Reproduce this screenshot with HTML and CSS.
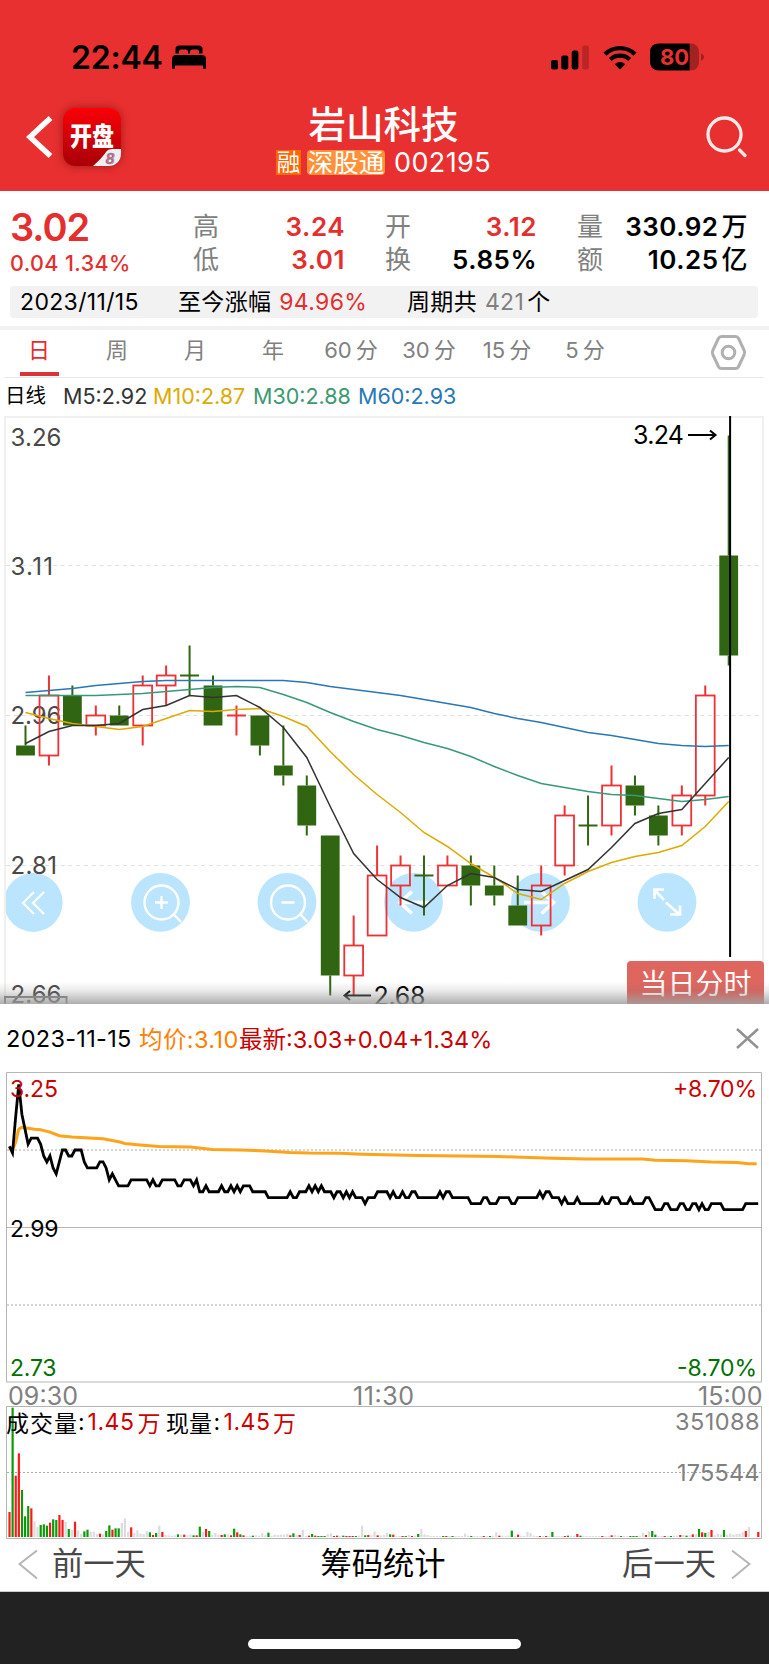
FILE: index.html
```
<!DOCTYPE html>
<html lang="zh-CN">
<head>
  <meta charset="UTF-8" />
  <title>岩山科技 002195</title>
  <link rel="stylesheet" href="styles.css">
</head>
<body>

  <header class="header">
    <div class="status">
      <span class="time">22:44</span>
      <svg class="bed" width="34" height="24" viewBox="0 0 34 24">
        <path d="M3.5 8.5V4Q3.500 .5 7 .5H27Q30.500 .5 30.500 4V8.500H27V6.500Q27 4.500 25 4.500H20.500Q18 4.500 18 6.500V8.500H16V6.500Q16 4.500 13.500 4.500H9Q7 4.500 7 6.500V8.500Z" />
        <path d="M0 23V14Q0 10 4 10H30Q34 10 34 14V23Q34 24 32.500 24Q31 24 31 23V20.500H3V23Q3 24 1.500 24Q0 24 0 23Z" />
      </svg>
      <div class="status-right">
        <svg width="39" height="25" viewBox="0 0 39 25">
          <rect x="0" y="15" width="7" height="9.500" rx="2" />
          <rect x="10.300" y="10.500" width="7" height="14" rx="2" />
          <rect x="20.700" y="5.500" width="6.700" height="19" rx="2" />
          <rect x="31.200" y="0.500" width="6.700" height="24" rx="2" opacity=".2" />
        </svg>
        <svg class="wifi" width="34" height="25" viewBox="0 0 34 25">
          <path d="M2 9.200A21.500 21.500 0 0 1 32 9.200" fill="none" stroke="#000" stroke-width="4.400" />
          <path d="M7.300 14.600A14 14 0 0 1 26.700 14.600" fill="none" stroke="#000" stroke-width="4.200" />
          <path d="M17 24.500L11.700 19.200A7.500 7.500 0 0 1 22.300 19.200Z" />
        </svg>
        <svg width="54" height="28" viewBox="0 0 54 28">
          <path d="M9 .5H39.700V27.500H9Q0 27.500 0 18.500V9.500Q0 .5 9 .5Z" />
          <path d="M39.700 .5H40Q49 .5 49 9.500V18.500Q49 27.500 40 27.500H39.700ZM51 10.500Q54 11.500 54 14T51 17.500Z" opacity=".3" />
          <text class="battery" x="24.500" y="22.300">80</text>
        </svg>
      </div>
    </div>

    <div class="nav">
      <div class="nav-left">
        <svg width="28" height="42" viewBox="0 0 28 42">
          <path d="M24.500 2L4 21L24.500 40" fill="none" stroke="#fff" stroke-width="5.500" />
        </svg>
        <div class="app">
          <div class="app-name">开盘</div>
          <svg class="app-corner" width="28" height="17" viewBox="0 0 28 17">
            <path d="M0 17Q9 9 13 3Q15 0 19 0H28V17Z" fill="#f1eef2" />
            <text class="eight" x="17" y="14.500">8</text>
          </svg>
        </div>
      </div>
      <div class="title">
        <h1>岩山科技</h1>
        <div class="subtitle">
          <span class="tag tag-rong">融</span>
          <span class="tag tag-sgt">深股通</span>
          <span class="code">002195</span>
        </div>
      </div>
      <svg class="search" width="42" height="42" viewBox="0 0 42 42">
        <circle cx="18.500" cy="18.500" r="16.500" />
        <path d="M33.500 34L39 39.500" stroke-linecap="round" />
      </svg>
    </div>
  </header>

  <section class="quote">
    <div class="price">
      <div class="last">3.02</div>
      <div class="change">0.04 1.34%</div>
    </div>
    <dl class="pair high">
      <dt>高</dt><dd class="up">3.24</dd>
      <dt>低</dt><dd class="up">3.01</dd>
    </dl>
    <dl class="pair open">
      <dt>开</dt><dd class="up">3.12</dd>
      <dt>换</dt><dd>5.85%</dd>
    </dl>
    <dl class="pair vol">
      <dt>量</dt><dd>330.92<i>万</i></dd>
      <dt>额</dt><dd>10.25<i>亿</i></dd>
    </dl>
  </section>

  <div class="info">
    <span class="info-date">2023/11/15</span>
    <span class="info-gain">至今涨幅 <b>94.96%</b></span>
    <span class="info-count">周期共 <em>421</em>个</span>
  </div>

  <nav class="tabs">
    <a class="active">日</a>
    <a>周</a>
    <a>月</a>
    <a>年</a>
    <a>60<i>分</i></a>
    <a>30<i>分</i></a>
    <a>15<i>分</i></a>
    <a>5<i>分</i></a>
    <svg class="settings" width="37" height="37" viewBox="0 0 37 37">
      <path d="M11.500 2.500H25.500Q27.500 2.500 28.500 4.300L34.200 16.500Q35.200 18.500 34.200 20.500L28.500 32.700Q27.500 34.500 25.500 34.500H11.500Q9.500 34.500 8.500 32.700L2.800 20.500Q1.800 18.500 2.800 16.500L8.500 4.300Q9.500 2.500 11.500 2.500Z" />
      <circle cx="18.500" cy="18.500" r="6.300" />
    </svg>
  </nav>

  <div class="ma">
    <span class="ma-name">日线</span>
    <span class="m5">M5:2.92</span>
    <span class="m10">M10:2.87</span>
    <span class="m30">M30:2.88</span>
    <span class="m60">M60:2.93</span>
  </div>

  <div class="kline">
    <svg width="769" height="588" viewBox="0 0 769 588">
      <path class="frame" d="M5 590V1H763V590" />
      <g class="grid">
        <path d="M6 149.500H759" />
        <path d="M6 299.500H759" />
        <path d="M6 449.500H759" />
      </g>
      <g class="tools">
        <path class="disc" d="M6 475.500A29.400 29.400 0 1 1 6 497.500Z" />
        <path d="M34 476L23 487L34 498M44 476L33 487L44 498" stroke-width="2.200" />
        <circle class="disc" cx="160.500" cy="486.300" r="29.400" />
        <circle cx="161.500" cy="486.500" r="17" />
        <path d="M173.500 498L181 506M155 486.500H168M161.500 480V493" />
        <circle class="disc" cx="287" cy="486.300" r="29.400" />
        <circle cx="288" cy="486.500" r="17" />
        <path d="M300 498L307.500 506M281.500 486.500H294.500" />
        <circle class="disc" cx="413.500" cy="486.300" r="29.400" />
        <path d="M429 486.500H400M412 475.500L400 486.500L412 497.500" stroke-width="3.500" />
        <circle class="disc" cx="540.500" cy="486.300" r="29.400" />
        <path d="M524 486.500H553M541.500 475.500L553.500 486.500L541.500 497.500" stroke-width="3.500" />
        <circle class="disc" cx="667" cy="486.300" r="29.400" />
        <path d="M664 484L655 474.500M654.500 483V473.500H664M666 486.500L679.500 498.500M680 489.500V498.500H670" stroke-width="2.600" />
      </g>
      <g class="scale">
        <text x="10.500" y="29.500" textLength="51">3.26</text>
        <text x="10.500" y="158.500" textLength="42.500">3.11</text>
        <text x="10.500" y="308" textLength="51">2.96</text>
        <text x="10.500" y="458" textLength="46.500">2.81</text>
        <text x="10.500" y="587" textLength="51">2.66</text>
      </g>
      <g id="candles"></g>
      <g id="averages"></g>
      <g class="marks">
        <text x="633" y="28" textLength="51">3.24</text>
        <path d="M688 19H716M710 14.500L715.500 19L710 23.500" />
        <text x="373.500" y="589" textLength="52">2.68</text>
        <path d="M371 579.500H344M350 575L344.500 579.500L350 584" stroke-width="1.600" />
      </g>
      <path class="cursor" d="M730.100 -1V541" />
      <path class="slider" d="M5 588V581H66.500V588" />
    </svg>
    <div class="day-btn">当日分时</div>
    <div class="shade"></div>
  </div>

  <div class="day-head">
    <span class="day-date">2023-11-15</span>
    <span class="day-avg">均价:3.10</span>
    <span class="day-last">最新:3.03+0.04+1.34%</span>
    <svg class="close" width="23" height="21" viewBox="0 0 23 21">
      <path d="M1 1L22 20M22 1L1 20" />
    </svg>
  </div>

  <svg class="day" width="769" height="467" viewBox="0 0 769 467">
    <path class="box" d="M6.500 .5H761.500V310H6.500ZM6.500 155.500H761.500M6.500 334.500H761.500V466.500H6.500Z" />
    <path class="dots" d="M7 78H761M7 233H761M7 400.500H761" />
    <g id="volume"></g>
    <polyline id="avgLine" />
    <polyline id="dayLine" />
    <text class="t-up" x="10" y="25" textLength="48">3.25</text>
    <text class="t-up" x="673" y="25" textLength="84">+8.70%</text>
    <text x="10" y="164.500" textLength="48.500">2.99</text>
    <text class="t-down" x="10" y="303.500" textLength="46.500">2.73</text>
    <text class="t-down" x="677" y="303.500" textLength="80">-8.70%</text>
    <g class="axis">
      <text x="8" y="333" textLength="70">09:30</text>
      <text x="353" y="333" textLength="61">11:30</text>
      <text x="698" y="333" textLength="64.500">15:00</text>
      <text x="675" y="358" textLength="84.500" class="small">351088</text>
      <text x="677" y="409" textLength="82.500" class="small">175544</text>
    </g>
    <text x="6" y="359.500" textLength="71">成交量</text>
    <text x="78" y="358">:</text>
    <text class="t-up" x="87.500" y="358" textLength="46.500">1.45</text>
    <text class="t-up" x="137.500" y="359.500">万</text>
    <text x="166" y="359.500" textLength="46">现量</text>
    <text x="213.500" y="358">:</text>
    <text class="t-up" x="223.500" y="358" textLength="46.500">1.45</text>
    <text class="t-up" x="273" y="359.500">万</text>
  </svg>

  <div class="bottom">
    <span class="side">
      <svg width="21" height="31" viewBox="0 0 21 31"><path d="M19 1.500L1.500 15L19 29.500" /></svg>
      前一天
    </span>
    <span class="chips">筹码统计</span>
    <span class="side next">
      后一天
      <svg width="21" height="31" viewBox="0 0 21 31"><path d="M2 1.500L19.500 15L2 29.500" /></svg>
    </span>
  </div>

  <footer class="home"><div class="home-bar"></div></footer>

  <script src="script.js"></script>
</body>
</html>
```

FILE: styles.css
```
body {
  margin: 0;
  width: 769px;
  height: 1665px;
  overflow: hidden;
  background: #fff;
  color: #000;
  font-family: Inter, "Noto Sans CJK SC", sans-serif;
}
i, em, b {
  font-style: normal;
  font-weight: inherit;
}

/* header */
.header {
  height: 191px;
  background: #e93030;
}
.status {
  display: flex;
  align-items: center;
  height: 96px;
  padding: 18px 65px 0 71px;
  box-sizing: border-box;
}
.time {
  font-size: 32px;
  font-weight: 600;
  letter-spacing: -0.2px;
}
.bed {
  margin-left: 9px;
}
.status-right {
  display: flex;
  align-items: center;
  margin-left: auto;
}
.wifi {
  margin: 0 13px 0 13px;
}
.battery {
  font-size: 22px;
  font-weight: 700;
  fill: #e93030;
  text-anchor: middle;
}
.nav {
  display: grid;
  grid-template-columns: 1fr auto 1fr;
  height: 95px;
  padding: 0 27px 0 25px;
}
.nav-left {
  display: flex;
  align-items: center;
  height: 82px;
  margin-left: 1px;
  gap: 9px;
}
.app {
  position: relative;
  width: 58px;
  height: 58px;
  border-radius: 12px;
  overflow: hidden;
  background: linear-gradient(#fb0007, #d60008 45%, #a80007);
  box-shadow: 0 0 10px rgba(90, 0, 0, 0.5);
  color: #fff;
  font-size: 22px;
  font-weight: 900;
  line-height: 57px;
  text-align: center;
}
.app-name {
  transform: scaleY(1.2);
}
.app-corner {
  position: absolute;
  right: 0;
  bottom: 0;
}
.eight {
  font-size: 14px;
  font-weight: 700;
  font-style: italic;
  fill: #e8663c;
  stroke: #5a7de0;
  stroke-width: 0.5px;
  text-anchor: middle;
}
.title {
  color: #fff;
  text-align: center;
}
.title h1 {
  margin: 9px 0 0;
  font-size: 37.5px;
  font-weight: 500;
  line-height: 40px;
}
.subtitle {
  display: flex;
  align-items: center;
  justify-content: center;
  height: 33px;
  padding-top: 1px;
}
.tag {
  height: 25px;
  font-size: 23.5px;
  line-height: 25px;
}
.tag-rong {
  width: 25px;
  background: #ff6600;
}
.tag-sgt {
  width: 78px;
  margin: 0 9px 0 6px;
  border-radius: 4px;
  background: #ff9138;
  font-size: 25.5px;
}
.code {
  font-size: 27px;
  letter-spacing: 0.4px;
}
.search {
  justify-self: end;
  margin: 20px -6px 0 0;
  fill: none;
  stroke: #fbeaea;
  stroke-width: 3.3px;
}

/* quote */
.quote {
  display: flex;
  height: 94.5px;
  padding: 20px 0 0 10px;
  box-sizing: border-box;
}
.price {
  width: 183px;
  color: #e52e2e;
}
.last {
  font-size: 38px;
  font-weight: 600;
  line-height: 33px;
  letter-spacing: -1px;
}
.change {
  font-size: 21.5px;
  font-weight: 500;
  line-height: 38px;
  letter-spacing: 0.4px;
}
.pair {
  display: grid;
  grid-template-columns: auto 1fr;
  grid-auto-rows: 32.5px;
  margin: 0;
  font-size: 26px;
  line-height: 32.5px;
}
.pair dt {
  color: #808080;
}
.pair dd {
  margin: 0;
  text-align: right;
  font-weight: 600;
  letter-spacing: 0.5px;
}
.pair i {
  margin-left: 3px;
  font-weight: 500;
}
.high {
  width: 152px;
  margin-right: 40px;
}
.open {
  width: 152px;
  margin-right: 40px;
}
.vol {
  width: 171px;
}
.up {
  color: #e52e2e;
}

/* range info */
.info {
  display: flex;
  height: 32.5px;
  margin: 0 11px 8px 10px;
  border-radius: 4px;
  background: #f2f2f2;
  font-size: 23px;
  line-height: 33px;
  letter-spacing: 0.35px;
  white-space: pre;
}
.info-date {
  width: 158px;
  padding-left: 10px;
}
.info-gain {
  width: 229px;
}
.info-gain b {
  margin-left: 1px;
  color: #e52e2e;
}
.info-count em {
  margin: 0 3px 0 1px;
  color: #808080;
}

/* tabs */
.tabs {
  position: relative;
  display: flex;
  height: 47px;
  border-top: 4px solid #f2f2f2;
  padding: 0;
  color: #808080;
  font-size: 22px;
}
.tabs::after {
  content: "";
  position: absolute;
  left: 4px;
  right: 5px;
  bottom: -1px;
  border-bottom: 1px solid #e8e8e8;
}
.tabs a {
  position: relative;
  width: 78px;
  line-height: 41px;
  text-align: center;
}
.tabs i {
  margin-left: 4px;
}
.tabs .active {
  color: #e52e2e;
}
.tabs .active::after {
  content: "";
  position: absolute;
  left: 20px;
  bottom: 1px;
  width: 39px;
  height: 4px;
  background: #dd3338;
}
.settings {
  margin: 4px 22px 0 auto;
  fill: none;
  stroke: #b0b0b0;
  stroke-width: 3px;
}

/* moving averages */
.ma {
  display: flex;
  height: 39px;
  padding: 0 5px;
  font-size: 21.5px;
  line-height: 38px;
}
.ma-name {
  width: 58px;
  font-size: 20.5px;
}
.m5 {
  width: 90px;
  color: #333;
}
.m10 {
  width: 100px;
  color: #ddaa00;
}
.m30 {
  width: 105px;
  color: #3d9970;
}
.m60 {
  color: #2878b5;
}

/* daily candles */
.kline {
  position: relative;
  height: 588px;
  overflow: hidden;
}
.kline svg {
  display: block;
}
.frame {
  fill: none;
  stroke: #f0f0f0;
  stroke-width: 2;
}
.grid {
  stroke: #e0e0e0;
  stroke-dasharray: 4 3.8;
}
.tools {
  fill: none;
  stroke: #fff;
  stroke-width: 2.4;
}
.tools .disc {
  fill: #bbe5ff;
  stroke: none;
}
.scale {
  font-size: 24px;
  fill: #484848;
}
.marks {
  font-size: 25px;
}
.marks path {
  fill: none;
  stroke: #000;
  stroke-width: 2;
}
.cursor {
  stroke: #000;
  stroke-width: 2;
}
.slider {
  fill: none;
  stroke: #777;
  stroke-width: 2;
}
.day-btn {
  position: absolute;
  left: 627px;
  top: 545px;
  width: 137px;
  height: 50px;
  border-radius: 4px;
  background: #df665f;
  color: #fff;
  font-size: 28px;
  line-height: 46px;
  text-align: center;
}
.shade {
  position: absolute;
  left: 0;
  right: 0;
  bottom: 0;
  height: 22px;
  background: linear-gradient(rgba(90, 90, 90, 0), rgba(110, 110, 110, 0.15) 40%, rgba(160, 160, 160, 0.85));
}

/* intraday */
.day-head {
  display: flex;
  align-items: center;
  height: 68px;
  padding: 0 10px 0 6px;
  font-size: 23.5px;
}
.day-date {
  width: 133px;
  letter-spacing: 0.3px;
}
.day-avg {
  width: 100px;
  color: #ff8000;
  letter-spacing: 0.4px;
}
.day-last {
  color: #cc0000;
}
.close {
  margin-left: auto;
  fill: none;
  stroke: #909090;
  stroke-width: 2.4px;
}
.day {
  display: block;
  font-size: 23px;
}
.box {
  fill: none;
  stroke: #b5b5b5;
}
.dots {
  stroke: #aaa;
  stroke-dasharray: 2 2;
}
#avgLine {
  fill: none;
  stroke: #ffa31a;
  stroke-width: 3;
}
#dayLine {
  fill: none;
  stroke: #000;
  stroke-width: 2.8;
}
.t-up {
  fill: #cc0000;
}
.t-down {
  fill: #007000;
}
.axis {
  fill: #808080;
  font-size: 25px;
}
.small {
  font-size: 23.5px;
}

/* bottom bar */
.bottom {
  display: flex;
  align-items: center;
  justify-content: space-between;
  height: 52px;
  padding: 0 18px;
  border-bottom: 1px solid #ccc;
  font-size: 31.3px;
  line-height: 50px;
}
.chips {
  margin: -2px 2px 0 0;
}
.side {
  display: flex;
  align-items: center;
  gap: 13px;
  margin-top: -2px;
  color: #484848;
}
.side svg {
  fill: none;
  stroke: #b5b5b5;
  stroke-width: 2px;
}
.next {
  gap: 14px;
}
.home {
  height: 72px;
  padding-top: 47px;
  box-sizing: border-box;
  background: #222;
}
.home-bar {
  width: 273px;
  height: 10px;
  margin: 0 auto;
  border-radius: 5px;
  background: #fff;
}
```

FILE: script.js
```
const NS = "http://www.w3.org/2000/svg";

function add(parent, tag, attrs) {
  const el = document.createElementNS(NS, tag);
  for (const k in attrs) el.setAttribute(k, attrs[k]);
  parent.appendChild(el);
  return el;
}

// open, close, high, low (in fen)
const days = [
  [293,292,295,292], [292,298,300,291], [298,295,299,295], [295,296,297,294],
  [296,295,297,295], [295,299,300,293], [299,300,301,297], [300,300,303,298],
  [299,295,300,295], [296,296,297,294], [296,293,296,292], [291,290,295,289],
  [289,285,290,284], [284,270,284,268], [270,273,276,268], [274,280,283,274],
  [279,281,282,277], [280,280,282,276], [279,281,282,279], [281,279,282,277],
  [279,278,281,277], [277,275,280,275], [275,279,281,274], [281,286,287,280],
  [285,285,288,283], [285,289,291,284], [289,287,290,286], [286,284,287,283],
  [285,288,289,284], [288,298,299,287], [312,302,324,301]
];
const flatUp = [9];

const dayX = i => 25.5 + i * 23.44;
const priceY = p => 149.5 + (311 - p) * 10;

const candles = document.getElementById("candles");
days.forEach(([o, c, h, l], i) => {
  const up = c > o || flatUp.includes(i);
  const color = up ? "#f03034" : "#306611";
  const x = dayX(i);
  const top = priceY(Math.max(o, c));
  const bottom = priceY(Math.min(o, c));
  add(candles, "path", {
    d: `M${x} ${priceY(h)}V${top}M${x} ${bottom}V${priceY(l)}`,
    stroke: color, "stroke-width": 2
  });
  if (o === c) {
    add(candles, "path", { d: `M${x - 9.5} ${top}H${x + 9.5}`, stroke: color, "stroke-width": 2 });
  } else {
    add(candles, "rect", {
      x: x - 9.4, y: top, width: 18.8, height: bottom - top,
      fill: up ? "none" : color, stroke: up ? color : "none", "stroke-width": 1.8
    });
  }
});

const averages = [
  ["#2878b5", [298.3,298.5,298.7,299,299.2,299.4,299.5,299.5,299.5,299.5,299.5,299.5,299.3,298.9,298.6,298.3,298,297.6,297.2,296.8,296.2,295.7,295.3,294.8,294.3,294,293.6,293.2,293,292.9,293]],
  ["#37997a", [298,298,298,298,298.1,298.2,298.4,298.6,298.8,298.9,298.8,298.1,297.3,296.3,295.4,294.6,294,293.3,292.7,291.9,290.9,290,289.2,288.8,288.4,288.1,288,287.7,287.4,287.6,287.9]],
  ["#ddaa00", [296.3,295.7,295.2,294.9,294.6,294.9,295.7,296.5,296.4,296.6,296.7,295.9,294.9,292.4,290.1,288.1,286.3,284.3,282.9,281.2,279.8,278.2,277.6,279.2,280.4,281.3,281.9,282.3,283,284.9,287.4]],
  ["#333333", [293.2,294.4,295,295,295.2,296.6,297,298,297.8,298,296.8,294.8,291.8,286.9,282.2,279.6,277.8,276.8,279,280.2,279.8,278.6,278.4,279.5,280.6,282.8,285.2,286.2,286.6,289.2,291.8]]
];
averages.forEach(([color, list]) => {
  add(document.getElementById("averages"), "polyline", {
    points: list.map((p, i) => dayX(i) + "," + priceY(p)).join(" "),
    fill: "none", stroke: color, "stroke-width": 1.5
  });
});

// minute:fen above the previous close
const minutes = "0:13.6 1:12.5 2:18.5 3:24 4:19 5:16.5 6:14 7:15 9:15 10:14 11:12 12:11 13:12 14:10 15:9 16:11 17:13 18:13 19:12 20:12 21:13 23:13 24:11 25:10 28:10 29:11 30:11 31:10 32:8 33:9 34:8 35:7 38:7 39:8 44:8 45:7 46:8 47:7 48:7 49:8 53:8 54:7 55:7 56:8 58:8 59:7 60:8 61:6 62:6 63:7 64:6 67:6 68:7 69:6 70:6 71:7 72:6 73:7 74:6 75:7 77:7 78:6 82:6 83:5 89:5 90:6 91:5 92:5 93:6 95:6 96:7 97:6 98:7 99:6 100:7 101:6 103:6 104:5 105:6 106:6 107:5 108:6 109:5 110:6 111:5 113:5 114:4 115:5 117:5 118:6 121:6 122:5 123:6 124:5 125:5 126:6 127:5 128:5 129:6 130:6 131:5 137:5 138:6 139:5 140:6 141:6 142:5 147:5 148:4 151:4 152:5 153:5 154:4 156:4 157:5 160:5 161:4 162:4 163:5 169:5 170:6 171:5 172:6 173:6 174:5 176:5 177:4 178:5 179:4 181:4 182:5 183:4 189:4 190:5 191:4 192:4 193:5 195:5 196:4 198:4 199:5 200:4 203:4 204:5 205:5 206:4 207:3 209:3 210:4 211:4 212:3 214:3 215:4 216:4 217:3 218:3 219:4 220:4 221:3 222:4 223:3 224:3 225:4 228:4 229:3 235:3 236:4 240:4";
const average = "0:13.6 1:13 2:14.3 3:16.5 4:16.8 8:16.5 10:16.4 13:16 16:15.4 20:15.2 30:14.9 35:14.4 37:14.1 41:13.9 48:13.6 58:13.5 65:13.1 74:13 82:12.85 90:12.6 96:12.5 106:12.45 113:12.3 120:12.2 131:12.1 145:12 157:11.9 174:11.6 185:11.5 203:11.5 207:11.3 217:11.2 225:11 233:10.9 237:10.7 239.5:10.7";

const minX = i => 9.4 + i * 3.12;

function plot(id, text) {
  const points = text.split(" ").map(s => {
    const [m, v] = s.split(":").map(Number);
    return minX(m) + "," + (155.5 - v * 5.96);
  });
  document.getElementById(id).setAttribute("points", points.join(" "));
}
plot("avgLine", average);
plot("dayLine", minutes);

// volume per minute: r up, g down, w flat
const volume = "r75 g388 r184 r251 g141 g62 g93 r86 w47 w30 g36 g38 g34 r43 g53 g51 r66 r51 w45 g24 w22 r46 w20 w9 g17 g22 w16 w16 w9 r10 w8 g18 g35 r22 g26 g26 w42 w56 w15 r29 w12 w20 w10 w9 w18 g14 r6 g12 w34 r15 w6 w5 w4 w5 g8 w7 r7 w5 w8 g5 r5 g31 w15 r24 g18 w7 w12 w7 r6 g8 w8 r5 g25 r14 g8 r5 w4 w4 g4 w5 w4 w12 w5 g13 w4 w7 w6 w7 w7 w9 r5 g11 w6 r6 w22 w3 r4 g9 r4 g3 g3 g3 w8 w11 r3 r4 w4 g4 r3 r3 r3 g3 w4 w34 g5 r6 w5 w17 r5 w5 w6 w12 g8 r7 w3 w3 r3 g3 w6 r3 w4 g9 w24 w8 w6 w3 w3 w3 w3 g3 r3 w3 g3 w3 w3 w3 w10 w4 g3 w3 w3 w3 r3 w3 g3 w4 w14 r4 w4 w4 w4 g19 w3 r7 w3 w3 w15 w12 w4 w3 r3 w3 r3 w3 g15 w3 w3 w3 r3 g4 w4 w4 r9 g4 w3 w3 w3 w3 w3 w3 r3 w3 w3 r5 w6 w4 g3 w3 w3 g3 g3 g3 w4 w13 r6 w17 g18 g7 w3 w3 r3 w4 g3 w4 w4 r6 w6 g4 w5 r8 w8 g24 r14 g12 w15 r21 w5 w10 w7 g21 w6 w10 w7 w9 w10 w14 r18 w30 w0 w0 r15";
const barColor = { r: "#ff1a1a", g: "#0a9a0a", w: "#dcdcdc" };
volume.split(" ").forEach((s, i) => {
  const h = Number(s.slice(1)) / 3;
  add(document.getElementById("volume"), "rect", {
    x: minX(i) - 1, y: 465 - h, width: 2.2, height: h, fill: barColor[s[0]]
  });
});
```
